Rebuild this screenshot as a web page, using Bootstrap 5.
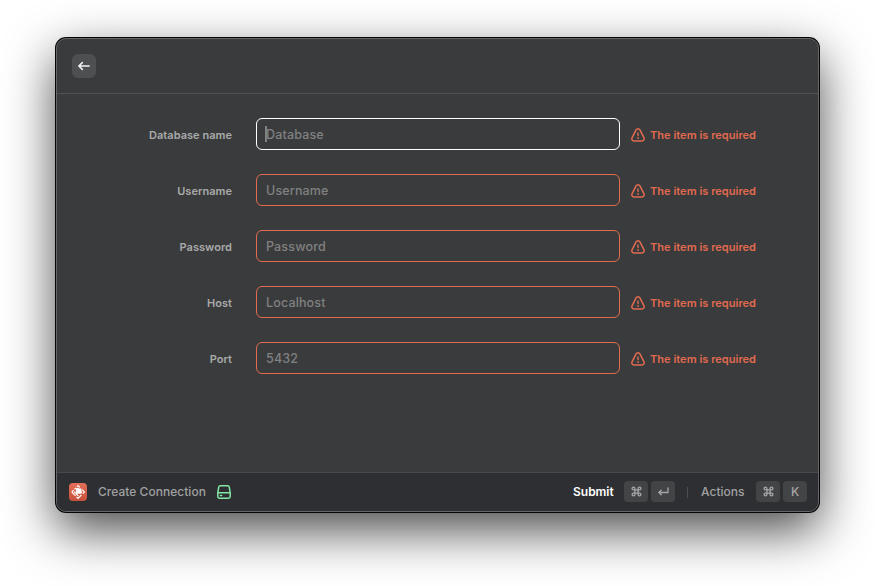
<!DOCTYPE html>
<html lang="en">
<head>
<meta charset="utf-8">
<meta name="viewport" content="width=device-width, initial-scale=1">
<title>Create Connection</title>
<link href="https://cdn.jsdelivr.net/npm/bootstrap@5.3.0/dist/css/bootstrap.min.css" rel="stylesheet">
<style>
  body { font-family: Inter, "Liberation Sans", sans-serif; background: #fff; height: 586px; overflow: hidden; padding: 38px 56px 0; -webkit-font-smoothing: antialiased; }
  .app-window { height: 474px; border: 1px solid #656667; border-radius: 10px; background: #3a3b3c; overflow: hidden;
    box-shadow: 0 0 0 1px #050505, 0 18px 50px rgba(0,0,0,.72); }
  .topbar { height: 55px; padding: 0 15px; border-bottom: 1px solid #505152; }
  .back-btn { width: 24px; height: 24px; border-radius: 6px; background: #4e4f50; }
  .form-area { padding: 24px 0 0 64px; }
  .form-line { height: 32px; margin-bottom: 24px; }
  .field-label { width: 111px; font-size: 11px; font-weight: 600; color: #a9aaaa; letter-spacing: .03px; line-height: 14px; padding-top: 2px; }
  .field-wrap { width: 364px; margin-left: 24px; margin-right: 11px; }
  .field-input { height: 32px; border-radius: 6px; padding: 0 9px; font-size: 12.5px; font-weight: 500; letter-spacing: .15px; color: #fff; }
  .field-input, .field-input:focus { background: transparent; border-color: #e26a50; box-shadow: none; }
  .field-input.active-field { border-color: #fff; }
  .field-input::placeholder { color: #808181; opacity: 1; }
  .text-caret { left: 9px; top: 8px; width: 2px; height: 16px; background: #808181; }
  .error-note { color: #e26a50; font-size: 11px; font-weight: 600; letter-spacing: .03px; line-height: 14px; padding-top: 2px; gap: 5px; }
  .bottombar { height: 39px; border-top: 1px solid #48494b; background: #2e2f32; padding: 0 11px 0 12px; font-size: 12px; font-weight: 500; line-height: 16px; color: #a0a1a2; }
  .create-title { margin-left: 11px; width: 119px; letter-spacing: .03px; }
  .submit-text { margin-right: 10.5px; letter-spacing: -.05px; }
  .actions-text { margin-right: 11.5px; }
  .keycap { width: 24px; height: 21px; margin-bottom: 1px; border-radius: 4px; background: #434446; color: #a5a6a7; }
  .next-key { margin-left: 3px; }
  .split-line { width: 1px; height: 11px; background: #4c4d4f; margin: 0 13px 0 12px; }
  svg { display: block; flex: none; }
</style>
</head>
<body>
<svg width="0" height="0" class="position-absolute" aria-hidden="true">
  <symbol id="warn" viewBox="0 0 14 14"><path d="M5.1 1.9a2.15 2.15 0 0 1 3.8 0l4 7.8a2.15 2.15 0 0 1-1.9 3.25H3A2.15 2.15 0 0 1 1.1 9.7z" fill="none" stroke="currentColor" stroke-width="1.5" stroke-linejoin="round"/><path d="M7 4.9v2.7" fill="none" stroke="currentColor" stroke-width="1.4" stroke-linecap="round"/><circle cx="7" cy="10" r=".9" fill="currentColor"/></symbol>
  <symbol id="cmd" viewBox="0 0 11 11"><path d="M3.9 3.9H2.5A1.4 1.4 0 1 1 3.9 2.5v6a1.4 1.4 0 1 1-1.4-1.4h6a1.4 1.4 0 1 1-1.4 1.4v-6a1.4 1.4 0 1 1 1.4 1.4z" fill="none" stroke="currentColor" stroke-width="1.35"/></symbol>
</svg>
<main class="app-window d-flex flex-column">
  <header class="topbar d-flex align-items-center flex-shrink-0">
    <button class="back-btn btn border-0 p-0 d-flex align-items-center justify-content-center" aria-label="Back">
      <svg width="12" height="10" viewBox="0 0 12 10" fill="none" stroke="#f2f2f2" stroke-width="1.5" stroke-linecap="round" stroke-linejoin="round"><path d="M11.2 5H1M4.3 1.6.8 5l3.5 3.4"/></svg>
    </button>
  </header>
  <form class="form-area flex-grow-1">
    <div class="form-line d-flex align-items-center"><label class="field-label text-end text-nowrap flex-shrink-0" for="db">Database name</label><div class="field-wrap position-relative flex-shrink-0"><input id="db" class="form-control field-input active-field" placeholder="Database"><span class="text-caret position-absolute"></span></div><div class="error-note d-flex align-items-center text-nowrap"><svg width="14" height="14"><use href="#warn"/></svg>The item is required</div></div>
    <div class="form-line d-flex align-items-center"><label class="field-label text-end text-nowrap flex-shrink-0" for="user">Username</label><div class="field-wrap flex-shrink-0"><input id="user" class="form-control field-input" placeholder="Username"></div><div class="error-note d-flex align-items-center text-nowrap"><svg width="14" height="14"><use href="#warn"/></svg>The item is required</div></div>
    <div class="form-line d-flex align-items-center"><label class="field-label text-end text-nowrap flex-shrink-0" for="pass">Password</label><div class="field-wrap flex-shrink-0"><input id="pass" class="form-control field-input" placeholder="Password"></div><div class="error-note d-flex align-items-center text-nowrap"><svg width="14" height="14"><use href="#warn"/></svg>The item is required</div></div>
    <div class="form-line d-flex align-items-center"><label class="field-label text-end text-nowrap flex-shrink-0" for="host">Host</label><div class="field-wrap flex-shrink-0"><input id="host" class="form-control field-input" placeholder="Localhost"></div><div class="error-note d-flex align-items-center text-nowrap"><svg width="14" height="14"><use href="#warn"/></svg>The item is required</div></div>
    <div class="form-line d-flex align-items-center"><label class="field-label text-end text-nowrap flex-shrink-0" for="port">Port</label><div class="field-wrap flex-shrink-0"><input id="port" class="form-control field-input" placeholder="5432"></div><div class="error-note d-flex align-items-center text-nowrap"><svg width="14" height="14"><use href="#warn"/></svg>The item is required</div></div>
  </form>
  <footer class="bottombar d-flex align-items-center flex-shrink-0">
    <svg width="18" height="18" viewBox="0 0 18 18"><defs><linearGradient id="logo-bg" x2="0" y2="1"><stop stop-color="#e2705a"/><stop offset="1" stop-color="#c9513b"/></linearGradient></defs><rect width="18" height="18" rx="4" fill="url(#logo-bg)"/><g fill="none" stroke="#fff" stroke-width="1.1"><path d="M8 3.6 9 2.6l1.8 1.8M13 6.6 15.4 9l-1.6 1.6M12.4 12 9 15.4l-1.4-1.4M2.8 9l3.8 3.8M2.8 9l1.8-1.8M5 8.6l4.4 4.4M5.4 6.4 7 4.8"/></g><path d="M7 5.6c.8-.9 2.2-1 3-.2h2.4v2.4c.9.9.8 2-.1 3H7.6L6.8 10z" fill="#fff"/></svg>
    <span class="create-title text-nowrap">Create Connection</span>
    <svg width="14" height="14" viewBox="0 0 14 14" fill="none" stroke="#82e6a4" stroke-width="1.5" stroke-linejoin="round"><path d="M3.4.8h7.2a1.7 1.7 0 0 1 1.7 1.4l.9 5.6v3.7a1.7 1.7 0 0 1-1.7 1.7h-9A1.7 1.7 0 0 1 .8 11.5V7.8l.9-5.6A1.7 1.7 0 0 1 3.4.8zM.8 7.8h12.4"/><path d="M3.4 10.5h1.2" stroke-linecap="round"/></svg>
    <span class="submit-text ms-auto fw-semibold text-white">Submit</span>
    <span class="keycap d-flex align-items-center justify-content-center"><svg width="11" height="11"><use href="#cmd"/></svg></span>
    <span class="keycap next-key d-flex align-items-center justify-content-center"><svg width="11" height="9" viewBox="0 0 11 9" fill="none" stroke="currentColor" stroke-width="1.3" stroke-linecap="round" stroke-linejoin="round"><path d="M10 .8v4.7H1M3.2 3.2.9 5.5l2.3 2.3"/></svg></span>
    <span class="split-line"></span>
    <span class="actions-text">Actions</span>
    <span class="keycap d-flex align-items-center justify-content-center"><svg width="11" height="11"><use href="#cmd"/></svg></span>
    <span class="keycap next-key d-flex align-items-center justify-content-center">K</span>
  </footer>
</main>
<script src="https://cdn.jsdelivr.net/npm/bootstrap@5.3.0/dist/js/bootstrap.bundle.min.js"></script>
</body>
</html>
